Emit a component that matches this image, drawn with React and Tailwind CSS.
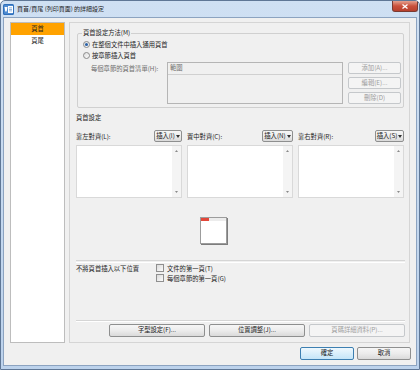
import clsx from "clsx";

function Btn({ children, className, disabled, primary }) {
  return (
    <div
      className={clsx(
        "flex items-center justify-center whitespace-nowrap rounded-[2px] border leading-none",
        disabled && "border-[#c5c8cb] bg-[#f4f4f4] text-[#9e9e9e]",
        primary && "border-[#3c7fb1] bg-linear-to-b from-[#eef8fe] to-[#c4e5f8] text-[#1a1a1a]",
        !disabled && !primary && "border-[#8e8f8f] bg-linear-to-b from-[#f6f6f6] via-[#ececec] to-[#dadada] text-[#1a1a1a]",
        className
      )}
    >
      {children}
    </div>
  );
}

function InsertBtn({ label, width }) {
  return (
    <Btn className={clsx("h-[12px] gap-[1px]", width)}>
      <span>{label}</span>
      <svg width="4" height="3" viewBox="0 0 4 3">
        <path d="M0 0h4L2 3z" fill="#333" />
      </svg>
    </Btn>
  );
}

function EditBox() {
  return (
    <div className="flex h-[53px] border border-[#d9d9d9] bg-white">
      <div className="flex-1" />
      <div className="flex w-[9px] flex-col items-center justify-between bg-[#f4f4f4] py-[4px]">
        <svg width="3" height="2" viewBox="0 0 3 2">
          <path d="M0 2h3L1.5 0z" fill="#8a8a8a" />
        </svg>
        <svg width="3" height="2" viewBox="0 0 3 2">
          <path d="M0 0h3L1.5 2z" fill="#8a8a8a" />
        </svg>
      </div>
    </div>
  );
}

function Radio({ checked, children }) {
  return (
    <div className="flex h-[11px] items-center gap-[2px]">
      <span className="flex h-[7px] w-[7px] items-center justify-center rounded-full border border-[#8b8b8b] bg-linear-to-br from-[#dedede] to-[#fbfbfb]">
        {checked && <span className="h-[3px] w-[3px] rounded-full bg-[#2a62a8]" />}
      </span>
      <span>{children}</span>
    </div>
  );
}

function Check({ children }) {
  return (
    <div className="flex h-[10px] items-center gap-[3px]">
      <span className="h-[8px] w-[8px] border border-[#8f8f8f] bg-linear-to-br from-[#dadada] to-[#fcfcfc]" />
      <span>{children}</span>
    </div>
  );
}

function Column({ label, insert, width }) {
  return (
    <div className="flex w-[106px] flex-col">
      <div className="flex h-[12px] items-end justify-between">
        <span className="pb-[1px]">{label}</span>
        <InsertBtn label={insert} width={width} />
      </div>
      <div className="mt-[3px]">
        <EditBox />
      </div>
    </div>
  );
}

export default function App() {
  return (
    <div className="relative flex h-[370px] w-[420px] flex-col overflow-hidden whitespace-nowrap rounded-t-[5px] border border-[#5f7796] bg-linear-to-b from-[#cfe0f3] to-[#bcd2ec] font-['Noto_Sans_CJK_TC','Noto_Sans',sans-serif] text-[6.3px] text-[#1e1e1e]">
      {/* 標題列 */}
      <div className="flex h-[16px] shrink-0 items-center gap-[3px] pl-[2px]">
        <svg width="11" height="11" viewBox="0 0 11 11">
          <rect x="0" y="0" width="11" height="11" rx="1.5" fill="#2f6fba" />
          <rect x="1" y="1" width="9" height="9" rx="1" fill="#4d8ad0" />
          <rect x="5" y="2" width="5" height="7" fill="#ffffff" />
          <rect x="6" y="3.5" width="3" height="0.8" fill="#7aa6d8" />
          <rect x="6" y="5" width="3" height="0.8" fill="#7aa6d8" />
          <rect x="6" y="6.5" width="3" height="0.8" fill="#7aa6d8" />
          <path d="M1.5 3h3l-0.8 4.5h-1.4z" fill="#ffffff" />
        </svg>
        <span className="text-[6px] leading-none">頁首/頁尾 (列印頁面) 的詳細設定</span>
      </div>
      <div className="absolute right-[1px] top-0 flex h-[11px] w-[26px] items-center justify-center rounded-b-[3px] border border-t-0 border-[#7a3a32] bg-linear-to-b from-[#e3a08f] via-[#c9503c] to-[#b7402d]">
        <svg width="6" height="5" viewBox="0 0 6 5">
          <path d="M0.5 0.5l5 4M5.5 0.5l-5 4" stroke="#ffffff" strokeWidth="1.3" />
        </svg>
      </div>

      {/* 內容 */}
      <div className="mx-[2px] mb-[3px] flex flex-1 flex-col border border-[#8ca3c0] bg-[#f0f0f0] pl-[6px] pr-[5px] pt-[4px]">
        <div className="flex h-[321px] gap-[4px]">
          <div className="flex w-[55px] flex-col border border-[#bdbdbd] bg-white">
            <div className="flex h-[12px] items-center justify-center bg-[#ffa200] leading-none">頁首</div>
            <div className="flex h-[12px] items-center justify-center leading-none">頁尾</div>
          </div>

          <div className="mr-[1px] flex flex-1 flex-col border border-[#d5d5d5] pb-[5px] pl-[6px] pr-[4px]">
            {/* 頁首設定方法 */}
            <div className="relative mx-[1px] mt-[10px] h-[75px] rounded-[2px] border border-[#d0d0d0] pl-[5px] pt-[5px]">
              <span className="absolute -top-[4px] left-[4px] bg-[#f0f0f0] px-[1px] leading-none">頁首設定方法(M)</span>
              <Radio checked>在整個文件中插入通用頁首</Radio>
              <Radio>按章節插入頁首</Radio>
              <div className="mt-[1px] flex">
                <span className="w-[84px] pl-[8px] pt-[4px] leading-none text-[#6d6d6d]">每個章節的頁首清單(H):</span>
                <div className="flex h-[42px] w-[176px] flex-col border border-[#b5b5b5] bg-[#f0f0f0]">
                  <div className="flex h-[12px] items-center border-b border-[#d0d0d0] pl-[2px] leading-none text-[#6d6d6d]">範圍</div>
                </div>
                <div className="ml-[5px] flex flex-col gap-[3px]">
                  <Btn disabled className="h-[12px] w-[53px]">添加(A)...</Btn>
                  <Btn disabled className="h-[12px] w-[53px]">編輯(E)...</Btn>
                  <Btn disabled className="h-[12px] w-[53px]">刪除(D)</Btn>
                </div>
              </div>
            </div>

            {/* 頁首設定 */}
            <div className="mt-[7px] leading-none">頁首設定</div>
            <div className="mt-[9px] flex gap-[5px]">
              <Column label="靠左對齊(L):" insert="插入(I)" width="w-[28px]" />
              <Column label="置中對齊(C):" insert="插入(N)" width="w-[31px]" />
              <Column label="靠右對齊(R):" insert="插入(S)" width="w-[29px]" />
            </div>

            <div className="ml-[124px] mt-[19px] flex h-[27px] w-[27px] flex-col border border-[#9c9c9c] bg-white shadow-[1px_1px_0_#7d7d7d]">
              <div className="flex h-[3px]">
                <span className="w-[8px] bg-[#e2473a]" />
                <span className="flex-1 bg-[#ececec]" />
              </div>
            </div>

            <div className="mt-[16px] h-[2px] border-t border-[#d5d5d5] shadow-[0_1px_0_#ffffff]" />

            <div className="mt-[1px] flex">
              <span className="w-[80px] pt-[3px] leading-none">不將頁首插入以下位置</span>
              <div className="flex flex-col">
                <Check>文件的第一頁(T)</Check>
                <Check>每個章節的第一頁(G)</Check>
              </div>
            </div>

            <div className="mt-auto border-t border-[#d5d5d5] shadow-[0_1px_0_#ffffff]" />
            <div className="mt-[3px] flex justify-end gap-[4px]">
              <Btn className="h-[13px] w-[96px]">字型設定(F)...</Btn>
              <Btn className="h-[13px] w-[96px]">位置調整(J)...</Btn>
              <Btn disabled className="h-[13px] w-[96px]">頁碼詳細資料(P)...</Btn>
            </div>
          </div>
        </div>

        <div className="mt-[4px] flex justify-end gap-[3px]">
          <Btn primary className="h-[13px] w-[54px]">確定</Btn>
          <Btn className="h-[13px] w-[54px]">取消</Btn>
        </div>
      </div>
    </div>
  );
}
